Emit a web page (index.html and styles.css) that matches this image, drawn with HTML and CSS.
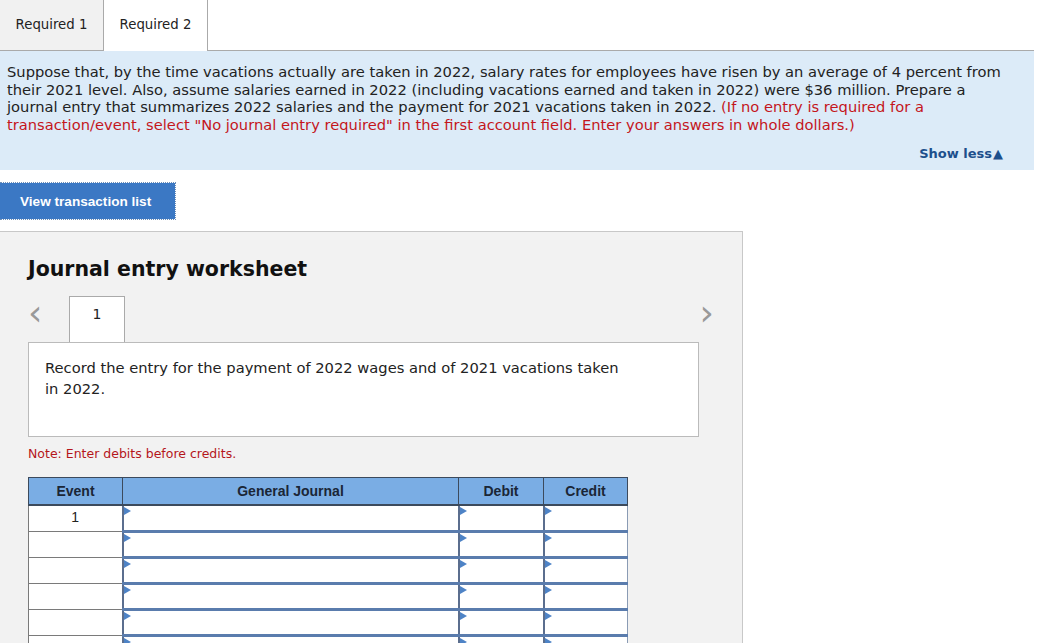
FILE: index.html
```html
<!DOCTYPE html>
<html lang="en">
<head>
<meta charset="UTF-8">
<title>Journal entry worksheet</title>
<link rel="stylesheet" href="styles.css">
</head>
<body>

<div class="tabs">
  <div class="tab">Required 1</div>
  <div class="tab active">Required 2</div>
  <div class="tab-fill"></div>
</div>

<div class="question">
  <p>
    Suppose that, by the time vacations actually are taken in 2022, salary rates for employees have risen by an average of 4 percent from<br>
    their 2021 level. Also, assume salaries earned in 2022 (including vacations earned and taken in 2022) were $36 million. Prepare a<br>
    journal entry that summarizes 2022 salaries and the payment for 2021 vacations taken in 2022.
    <span class="red">(If no entry is required for a<br>transaction/event, select "No journal entry required" in the first account field. Enter your answers in whole dollars.)</span>
  </p>
  <div class="show-less">Show less<span class="arrow">&#9650;</span></div>
</div>

<div class="btn-wrap">
  <button class="view-btn">View transaction list</button>
</div>

<div class="worksheet">
  <h2>Journal entry worksheet</h2>

  <div class="pager">
    <span class="chev">&lsaquo;</span>
    <div class="page-tab">1</div>
    <span class="chev right">&rsaquo;</span>
  </div>

  <div class="desc">
    Record the entry for the payment of 2022 wages and of 2021 vacations taken<br>in 2022.
  </div>

  <div class="note">Note: Enter debits before credits.</div>

  <table class="journal">
    <thead>
      <tr>
        <th class="c-event">Event</th>
        <th class="c-gj">General Journal</th>
        <th class="c-dr">Debit</th>
        <th class="c-cr">Credit</th>
      </tr>
    </thead>
    <tbody>
      <tr><td class="ev">1</td><td class="in"></td><td class="in"></td><td class="in"></td></tr>
      <tr><td class="ev"></td><td class="in"></td><td class="in"></td><td class="in"></td></tr>
      <tr><td class="ev"></td><td class="in"></td><td class="in"></td><td class="in"></td></tr>
      <tr><td class="ev"></td><td class="in"></td><td class="in"></td><td class="in"></td></tr>
      <tr><td class="ev"></td><td class="in"></td><td class="in"></td><td class="in"></td></tr>
      <tr><td class="ev"></td><td class="in"></td><td class="in"></td><td class="in"></td></tr>
    </tbody>
  </table>
</div>

</body>
</html>
```

FILE: styles.css
```css
body {
  margin: 0;
  font-family: "DejaVu Sans", Verdana, sans-serif;
  font-size: 13px;
  color: #222;
  background: #fff;
}
.tabs {
  display: flex;
  height: 51px;
  width: 1034px;
}
.tab {
  width: 104px;
  box-sizing: border-box;
  padding-top: 17px;
  text-align: center;
  background: #f1f1f1;
  border-right: 1px solid #aaa;
  border-bottom: 1px solid #aaa;
  font-size: 13.3px;
}
.tab.active {
  background: #fff;
  border-bottom: none;
}
.tab-fill {
  flex: 1;
  border-bottom: 1px solid #aaa;
}
.question {
  width: 1034px;
  height: 119px;
  box-sizing: border-box;
  background: #dcebf8;
  padding: 12px 7px 0 7px;
}
.question p {
  margin: 0;
  font-size: 14.7px;
  line-height: 17.7px;
  white-space: nowrap;
}
.red {
  color: #c4161c;
}
.show-less {
  text-align: right;
  padding-right: 24px;
  margin-top: 12px;
  font-size: 13px;
  font-weight: bold;
  color: #1d4f8c;
}
.arrow {
  font-size: 13px;
  margin-left: 1px;
}
.btn-wrap {
  margin-top: 12px;
  width: 176px;
  height: 38px;
  box-sizing: border-box;
  border: 1px dotted #6d8fb8;
  border-left: none;
}
.view-btn {
  display: block;
  width: 175px;
  height: 36px;
  border: none;
  background: #3b78c4;
  color: #fff;
  font-family: "Liberation Sans", Arial, sans-serif;
  font-size: 13.6px;
  font-weight: bold;
  text-align: left;
  padding-left: 20px;
}
.worksheet {
  margin-top: 11px;
  width: 743px;
  height: 420px;
  box-sizing: border-box;
  background: #f2f2f2;
  border-top: 1px solid #c8c8c8;
  border-right: 1px solid #c8c8c8;
  padding: 25px 0 0 28px;
}
.worksheet h2 {
  margin: 0;
  font-size: 20.5px;
  font-weight: bold;
  color: #111;
}
.pager {
  display: flex;
  align-items: flex-start;
  margin-top: 15px;
  width: 686px;
}
.chev {
  font-family: "DejaVu Sans", sans-serif;
  font-size: 36px;
  line-height: 30px;
  color: #999;
  width: 41px;
  margin-top: 2px;
}
.chev.right {
  margin-left: auto;
  width: auto;
}
.page-tab {
  width: 56px;
  height: 46px;
  box-sizing: border-box;
  background: #fff;
  border: 1px solid #aaa;
  border-bottom: none;
  text-align: center;
  padding-top: 9px;
  font-size: 14px;
}
.desc {
  width: 671px;
  height: 95px;
  box-sizing: border-box;
  background: #fff;
  border: 1px solid #bbb;
  padding: 15px 16px 0 16px;
  font-size: 14.7px;
  line-height: 20.5px;
  white-space: nowrap;
}
.note {
  margin-top: 9px;
  font-size: 12.5px;
  color: #b5161b;
}
.journal {
  margin-top: 16px;
  border-collapse: collapse;
  font-family: "Liberation Sans", Arial, sans-serif;
}
.journal th {
  background: #7aade4;
  color: #1a2636;
  font-size: 14px;
  font-weight: bold;
  height: 26px;
  padding: 0;
  border: 1px solid #3c4a5c;
  border-bottom: 2px solid #3c4a5c;
}
.c-event { width: 93px; }
.c-gj { width: 335px; }
.c-dr { width: 84px; }
.c-cr { width: 83px; }
.journal td {
  height: 21px;
  padding: 0;
  background: #fff;
}
.journal td.ev {
  text-align: center;
  font-size: 14px;
  border: 1px solid #7a7a7a;
  border-top: none;
  padding-bottom: 4px;
}
.journal td.in {
  position: relative;
  border-left: 2px solid #5b6e8e;
  border-right: 1px solid #8a9bb4;
  border-top: 1px solid #d4dbe6;
  border-bottom: 3px solid #5a7cad;
}
.journal td.in::before {
  content: "";
  position: absolute;
  left: 0;
  top: 1px;
  border-top: 4px solid transparent;
  border-bottom: 4px solid transparent;
  border-left: 7px solid #4e83c6;
}
```
